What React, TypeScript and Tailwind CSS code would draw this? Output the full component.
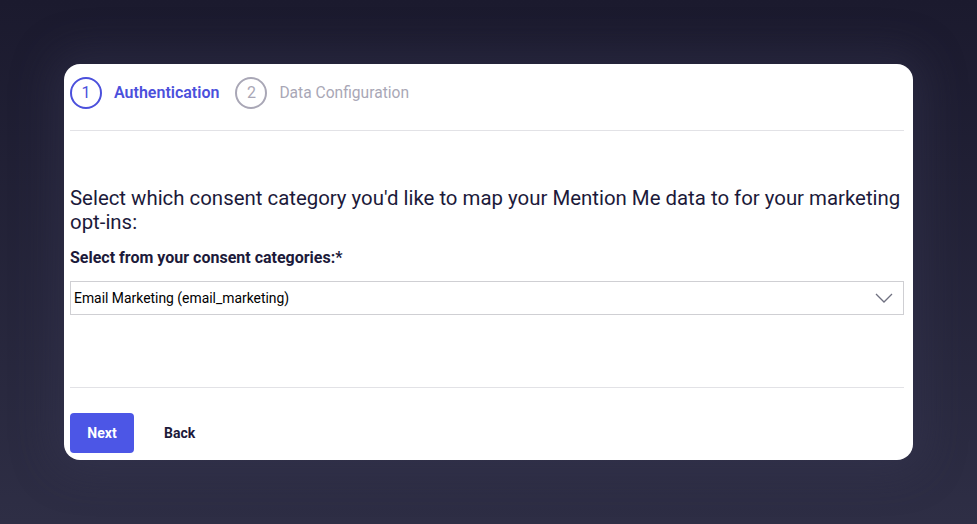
export default function App() {
  return (
    <div
      className="min-h-screen w-full bg-gradient-to-b from-[#1b1a2e] to-[#2e2e45] pt-16 pl-16 text-[#1c1a3a]"
      style={{ fontFamily: 'Roboto, "Liberation Sans", Arial, sans-serif' }}
    >
      <div className="w-[849px] h-[396px] rounded-2xl bg-white pl-[6px] pr-[9px] flex flex-col shadow-[0_0_40px_12px_rgba(60,60,90,0.35)]">
        {/* stepper */}
        <div className="flex items-center pt-[13px] pb-[21px] border-b border-[#e2e2e6]">
          <div className="w-8 h-8 rounded-full border-2 border-[#4b50dc] flex items-center justify-center text-[16px] text-[#4b50dc]">
            1
          </div>
          <span className="ml-3 text-[16px] leading-8 font-semibold text-[#4b50dc]">Authentication</span>
          <div className="ml-4 w-8 h-8 rounded-full border-2 border-[#a9a7b6] flex items-center justify-center text-[16px] text-[#a9a7b6]">
            2
          </div>
          <span className="ml-3 text-[15.6px] leading-8 text-[#a9a7b6]">Data Configuration</span>
        </div>

        <h2 className="mt-[55px] text-[20.4px] leading-6 text-[#1c1a3a]">
          Select which consent category you'd like to map your Mention Me data to for your marketing{' '}
          <span className="whitespace-nowrap">opt-ins:</span>
        </h2>

        <label className="mt-[14px] text-[16px] leading-5 font-bold text-[#1c1a3a]">
          Select from your consent categories:*
        </label>

        <div className="mt-[13px] h-[34px] border border-[#cfcfd3] flex items-center justify-between pl-[3px] pr-[10px]">
          <span className="text-[13.9px] text-black">Email Marketing (email_marketing)</span>
          <svg width="18" height="10" viewBox="0 0 18 10" fill="none">
            <path d="M1 1l8 8 8-8" stroke="#6f7080" strokeWidth="1.3" />
          </svg>
        </div>

        <div className="mt-[72px] border-t border-[#e2e2e6]" />

        <div className="mt-[25px] flex items-center">
          <button className="w-16 h-10 rounded bg-[#4c56e6] text-white text-[14px] font-bold">Next</button>
          <button className="ml-[30px] text-[14px] font-bold text-[#1c1a3a]">Back</button>
        </div>
      </div>
    </div>
  );
}
